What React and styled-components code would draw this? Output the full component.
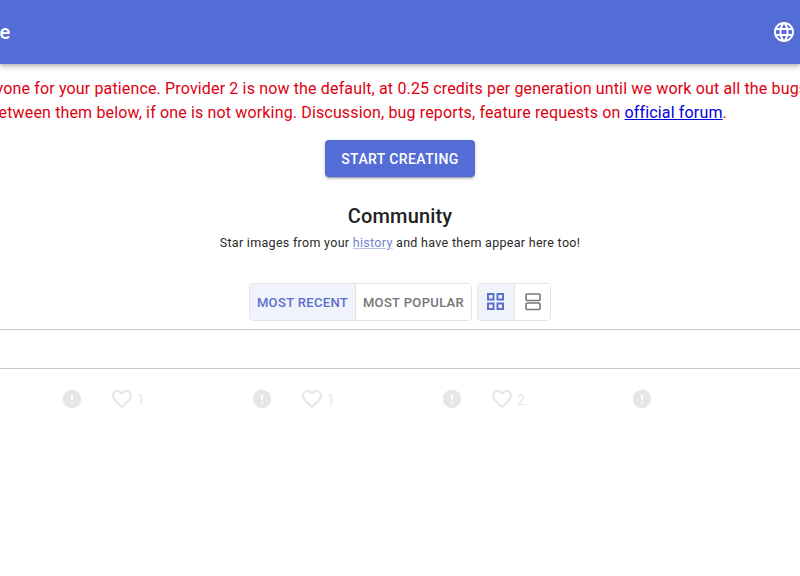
import React from "react";
import styled, { createGlobalStyle } from "styled-components";

const Global = createGlobalStyle`
  html, body {
    margin: 0;
    padding: 0;
    background: #fff;
    overflow: hidden;
    font-family: Roboto, "Liberation Sans", sans-serif;
  }
`;

const Page = styled.div`
  width: 800px;
  height: 576px;
  overflow: hidden;
  display: flex;
  flex-direction: column;
`;

const AppBar = styled.header`
  flex: none;
  height: 64px;
  background: #546dd6;
  box-shadow: 0 2px 4px -1px rgba(0, 0, 0, 0.2), 0 4px 5px 0 rgba(0, 0, 0, 0.14);
  display: flex;
  align-items: center;
  justify-content: space-between;
  padding-right: 4px;
  color: #fff;
`;

const Title = styled.div`
  font-size: 20px;
  font-weight: 500;
  letter-spacing: 0.15px;
  margin-left: -44px;
`;

const GlobeButton = styled.div`
  width: 24px;
  height: 24px;
  display: flex;
`;

const Notice = styled.div`
  margin: 13px 0 0 -111px;
  color: #dd0011;
  font-size: 16px;
  line-height: 24px;
  letter-spacing: 0.15px;
  white-space: nowrap;
`;

const NoticeLine = styled.div``;

const ForumLink = styled.a`
  color: #0000dd;
  text-decoration: underline;
`;

const Center = styled.div`
  display: flex;
  flex-direction: column;
  align-items: center;
`;

const StartButton = styled.button`
  margin-top: 15px;
  width: 150px;
  height: 37px;
  border: 0;
  border-radius: 4px;
  background: #546dd6;
  color: #fff;
  font: 500 14px Roboto, sans-serif;
  letter-spacing: 0.4px;
  box-shadow: 0 3px 1px -2px rgba(0, 0, 0, 0.2), 0 2px 2px 0 rgba(0, 0, 0, 0.14),
    0 1px 5px 0 rgba(0, 0, 0, 0.12);
`;

const Heading = styled.h2`
  margin: 26px 0 0;
  font-size: 20px;
  line-height: 26px;
  font-weight: 500;
  letter-spacing: 0.15px;
  color: #212121;
`;

const Subtitle = styled.p`
  margin: 4px 0 0;
  font-size: 12.5px;
  line-height: 20px;
  letter-spacing: 0.3px;
  color: #2a2a2a;
`;

const HistoryLink = styled.a`
  color: #6f82c8;
  text-decoration: underline;
  text-decoration-color: #b9c3e8;
`;

const Controls = styled.div`
  margin-top: 30px;
  display: flex;
  gap: 5px;
`;

const ToggleGroup = styled.div`
  display: flex;
  height: 36px;
  border: 1px solid #e3e3e3;
  border-radius: 4px;
  overflow: hidden;
`;

const Toggle = styled.div`
  display: flex;
  align-items: center;
  justify-content: center;
  box-sizing: border-box;
  width: ${(p) => p.$w}px;
  background: ${(p) => (p.$on ? "#f0f3fb" : "#fff")};
  color: ${(p) => (p.$on ? "#5a70cc" : "#757575")};
  border-left: ${(p) => (p.$first ? "0" : "1px solid #e3e3e3")};
  font-size: 13px;
  font-weight: 500;
  letter-spacing: 0.35px;
`;

const Band = styled.div`
  margin-top: 8px;
  height: 38px;
  border-bottom: 1px solid #c8c8c8;
  border-top: 1px solid #c8c8c8;
`;

const Feed = styled.div`
  display: flex;
  padding: 19px 0 0 61px;
`;

const Tile = styled.div`
  width: 190px;
  flex: none;
  display: flex;
  align-items: center;
  height: 22px;
  color: #e6e6e6;
`;

const HeartWrap = styled.div`
  margin-left: 27px;
  display: flex;
  align-items: center;
`;

const Count = styled.span`
  margin: 2px 0 0 3px;
  font-size: 14px;
  color: #e6e6e6;
`;

const Icon = ({ size = 24, d }) => (
  <svg width={size} height={size} viewBox="0 0 24 24" fill="currentColor">
    <path d={d} />
  </svg>
);

const GLOBE =
  "M11.99 2C6.47 2 2 6.48 2 12s4.47 10 9.99 10C17.52 22 22 17.52 22 12S17.52 2 11.99 2zm6.93 6h-2.95c-.32-1.25-.78-2.45-1.38-3.56 1.84.63 3.37 1.91 4.33 3.56zM12 4.04c.83 1.2 1.48 2.53 1.91 3.96h-3.82c.43-1.43 1.08-2.76 1.91-3.96zM4.26 14C4.1 13.36 4 12.69 4 12s.1-1.36.26-2h3.38c-.08.66-.14 1.32-.14 2 0 .68.06 1.34.14 2H4.26zm.82 2h2.95c.32 1.25.78 2.45 1.38 3.56-1.84-.63-3.37-1.9-4.33-3.56zm2.95-8H5.08c.96-1.66 2.49-2.93 4.33-3.56C8.81 5.55 8.35 6.75 8.03 8zM12 19.96c-.83-1.2-1.48-2.53-1.91-3.96h3.82c-.43 1.43-1.08 2.76-1.91 3.96zM14.34 14H9.66c-.09-.66-.16-1.32-.16-2 0-.68.07-1.35.16-2h4.68c.09.65.16 1.32.16 2 0 .68-.07 1.34-.16 2zm.25 5.56c.6-1.11 1.06-2.31 1.38-3.56h2.95c-.96 1.65-2.49 2.93-4.33 3.56zM16.36 14c.08-.66.14-1.32.14-2 0-.68-.06-1.34-.14-2h3.38c.16.64.26 1.31.26 2s-.1 1.36-.26 2h-3.38z";
const ALERT =
  "M12 2C6.48 2 2 6.48 2 12s4.48 10 10 10 10-4.48 10-10S17.52 2 12 2zm1 15h-2v-2h2v2zm0-4h-2V7h2v6z";
const HEART =
  "M16.5 3c-1.74 0-3.41.81-4.5 2.09C10.91 3.81 9.24 3 7.5 3 4.42 3 2 5.42 2 8.5c0 3.78 3.4 6.86 8.55 11.54L12 21.35l1.45-1.32C18.6 15.36 22 12.28 22 8.5 22 5.42 19.58 3 16.5 3zm-4.4 15.55l-.1.1-.1-.1C7.14 14.24 4 11.39 4 8.5 4 6.5 5.5 5 7.5 5c1.54 0 3.04.99 3.57 2.36h1.87C13.46 5.99 14.96 5 16.5 5c2 0 3.5 1.5 3.5 3.5 0 2.89-3.14 5.74-7.9 10.05z";

const GridIcon = () => (
  <svg width="20" height="20" viewBox="0 0 20 20" fill="none" stroke="currentColor" strokeWidth="2">
    <rect x="2" y="2" width="5.5" height="5.5" />
    <rect x="11.5" y="2" width="5.5" height="5.5" />
    <rect x="2" y="11.5" width="5.5" height="5.5" />
    <rect x="11.5" y="11.5" width="5.5" height="5.5" />
  </svg>
);

const AgendaIcon = () => (
  <svg width="20" height="20" viewBox="0 0 20 20" fill="none" stroke="currentColor" strokeWidth="1.6">
    <rect x="3" y="2" width="14" height="6.5" rx="1" />
    <rect x="3" y="11" width="14" height="6.5" rx="1" />
  </svg>
);

const tiles = [1, 1, 2, null];

export default function App() {
  return (
    <Page>
      <Global />
      <AppBar>
        <Title>Home</Title>
        <GlobeButton>
          <Icon d={GLOBE} />
        </GlobeButton>
      </AppBar>
      <Notice>
        <NoticeLine>
          Thanks to everyone for your patience. Provider 2 is now the default, at 0.25 credits per generation until we work out all the bugs.
        </NoticeLine>
        <NoticeLine>
          Try switching between them below, if one is not working. Discussion, bug reports, feature requests on <ForumLink href="#">official forum</ForumLink>.
        </NoticeLine>
      </Notice>
      <Center>
        <StartButton>START CREATING</StartButton>
        <Heading>Community</Heading>
        <Subtitle>
          Star images from your <HistoryLink href="#">history</HistoryLink> and have them appear here too!
        </Subtitle>
        <Controls>
          <ToggleGroup>
            <Toggle $w={105} $on $first>MOST RECENT</Toggle>
            <Toggle $w={116}>MOST POPULAR</Toggle>
          </ToggleGroup>
          <ToggleGroup>
            <Toggle $w={36} $on $first><GridIcon /></Toggle>
            <Toggle $w={36}><AgendaIcon /></Toggle>
          </ToggleGroup>
        </Controls>
      </Center>
      <Band />
      <Feed>
        {tiles.map((count, i) => (
          <Tile key={i}>
            <Icon size={22} d={ALERT} />
            {count !== null && (
              <HeartWrap>
                <Icon d={HEART} />
                <Count>{count}</Count>
              </HeartWrap>
            )}
          </Tile>
        ))}
      </Feed>
    </Page>
  );
}
